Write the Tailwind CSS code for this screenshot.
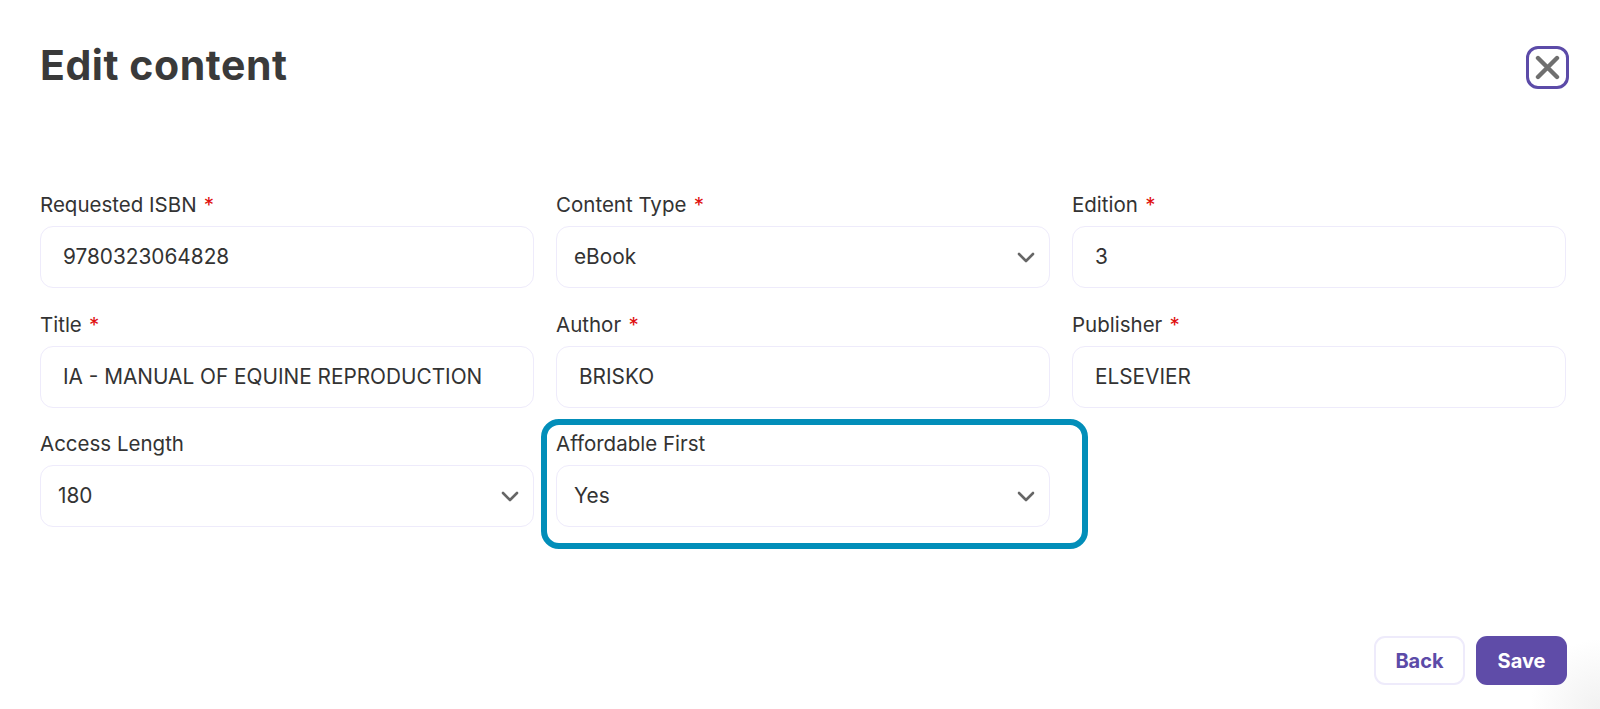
<!DOCTYPE html>
<html lang="en">
<head>
  <meta charset="UTF-8" />
  <title>Edit content</title>
  <script src="https://cdn.jsdelivr.net/npm/@tailwindcss/browser@4"></script>
</head>
<body class="bg-white text-[#333] font-['Inter','Liberation_Sans',sans-serif]">
  <div class="relative h-[709px] w-[1600px] overflow-hidden px-[40px] pt-[46px] bg-[radial-gradient(circle_at_100%_100%,#f1f1f1_0,#ffffff_70px)]">
    <div class="flex items-start justify-between">
      <h1 class="-mt-[4px] text-[41px] leading-[46px] font-bold text-[#3a3a3a] tracking-[0.55px]">Edit content</h1>
      <button class="flex h-[43px] w-[43px] -mr-[9px] items-center justify-center rounded-[12px] border-[3px] border-[#5c4ba8]">
        <svg width="25" height="25" viewBox="0 0 25 25" fill="none" stroke="#6f6f6f" stroke-width="4.4" stroke-linecap="round"><path d="M3 3L22 22M22 3L3 22" /></svg>
      </button>
    </div>

    <div class="mt-[102px] grid grid-cols-[494px_494px_494px] gap-x-[22px] gap-y-[22.5px]">
      <div>
        <label class="block text-[20.5px] leading-[27px] mb-[8px]">Requested ISBN <span class="ml-[1.5px] text-[#e01010]">*</span></label>
        <div class="flex h-[62px] items-center rounded-[13px] border-[1.5px] border-[#eeebfb] px-[22px] text-[20.8px]">9780323064828</div>
      </div>
      <div>
        <label class="block text-[20.5px] leading-[27px] mb-[8px]">Content Type <span class="ml-[1.5px] text-[#e01010]">*</span></label>
        <div class="flex h-[62px] items-center justify-between rounded-[13px] border-[1.5px] border-[#eeebfb] pl-[17px] pr-[14px] text-[20.8px]">eBook
          <svg width="18" height="11" viewBox="0 0 18 11" fill="none" stroke="#666" stroke-width="2.6" stroke-linecap="round" stroke-linejoin="round"><path d="M2 2L9 9L16 2" /></svg>
        </div>
      </div>
      <div>
        <label class="block text-[20.5px] leading-[27px] mb-[8px]">Edition <span class="ml-[1.5px] text-[#e01010]">*</span></label>
        <div class="flex h-[62px] items-center rounded-[13px] border-[1.5px] border-[#eeebfb] px-[22px] text-[20.8px]">3</div>
      </div>

      <div>
        <label class="block text-[20.5px] leading-[27px] mb-[8px]">Title <span class="ml-[1.5px] text-[#e01010]">*</span></label>
        <div class="flex h-[62px] items-center rounded-[13px] border-[1.5px] border-[#eeebfb] px-[22px] text-[20.8px]">IA - MANUAL OF EQUINE REPRODUCTION</div>
      </div>
      <div>
        <label class="block text-[20.5px] leading-[27px] mb-[8px]">Author <span class="ml-[1.5px] text-[#e01010]">*</span></label>
        <div class="flex h-[62px] items-center rounded-[13px] border-[1.5px] border-[#eeebfb] px-[22px] text-[20.8px]">BRISKO</div>
      </div>
      <div>
        <label class="block text-[20.5px] leading-[27px] mb-[8px]">Publisher <span class="ml-[1.5px] text-[#e01010]">*</span></label>
        <div class="flex h-[62px] items-center rounded-[13px] border-[1.5px] border-[#eeebfb] px-[22px] text-[20.8px]">ELSEVIER</div>
      </div>

      <div>
        <label class="block text-[20.5px] leading-[27px] mb-[8px]">Access Length</label>
        <div class="flex h-[62px] items-center justify-between rounded-[13px] border-[1.5px] border-[#eeebfb] pl-[17px] pr-[14px] text-[20.8px]">180
          <svg width="18" height="11" viewBox="0 0 18 11" fill="none" stroke="#666" stroke-width="2.6" stroke-linecap="round" stroke-linejoin="round"><path d="M2 2L9 9L16 2" /></svg>
        </div>
      </div>
      <div class="relative">
        <div class="absolute -left-[15px] -right-[38px] -top-[11px] -bottom-[22px] rounded-[18px] border-[6.5px] border-[#028eb9]"></div>
        <label class="block text-[20.5px] leading-[27px] mb-[8px]">Affordable First</label>
        <div class="flex h-[62px] items-center justify-between rounded-[13px] border-[1.5px] border-[#eeebfb] pl-[17px] pr-[14px] text-[20.8px]">Yes
          <svg width="18" height="11" viewBox="0 0 18 11" fill="none" stroke="#666" stroke-width="2.6" stroke-linecap="round" stroke-linejoin="round"><path d="M2 2L9 9L16 2" /></svg>
        </div>
      </div>
    </div>

    <div class="absolute bottom-[24px] right-[33px] flex gap-[11px]">
      <button class="h-[49px] w-[91px] rounded-[11px] border-2 border-[#eeebfb] bg-white text-[20px] font-bold text-[#5c4ba8]">Back</button>
      <button class="h-[49px] w-[91px] rounded-[11px] bg-[#5f4ca8] text-[20px] font-bold text-white">Save</button>
    </div>
  </div>
</body>
</html>
